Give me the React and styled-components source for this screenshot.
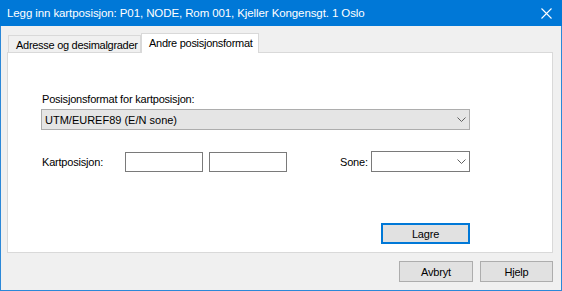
import React from 'react';
import styled, { createGlobalStyle } from 'styled-components';

const Global = createGlobalStyle`
  html, body { margin: 0; padding: 0; background: #f0f0f0; }
  body { font-family: "Liberation Sans", Arial, sans-serif; font-size: 11px; color: #000; }
  * { box-sizing: border-box; }
`;

const Window = styled.div`
  width: 562px;
  height: 291px;
  display: flex;
  flex-direction: column;
  background: #f0f0f0;
`;

const TitleBar = styled.div`
  height: 26px;
  flex: none;
  background: #0078d7;
  color: #fff;
  display: flex;
  align-items: center;
  justify-content: space-between;
  padding-left: 7px;
  font-size: 11.5px;
  letter-spacing: -0.1px;
`;

const CloseIcon = styled.svg`
  width: 11px;
  height: 11px;
  margin-right: 10px;
  display: block;
`;

const Frame = styled.div`
  flex: 1;
  display: flex;
  flex-direction: column;
  border: 1px solid #2b88d8;
  border-top: none;
  padding: 7px 8px 8px 6px;
`;

const TabStrip = styled.div`
  height: 20px;
  margin-bottom: -1px;
  display: flex;
  align-items: flex-end;
  padding-left: 1px;
`;

const Tab = styled.div`
  position: relative;
  z-index: ${p => (p.$active ? 2 : 0)};
  height: ${p => (p.$active ? 20 : 18)}px;
  width: ${p => p.$w}px;
  padding: 3px 0 0 7px;
  background: ${p => (p.$active ? '#fff' : '#f0f0f0')};
  border: 1px solid #d9d9d9;
  border-bottom: none;
  white-space: nowrap;
  line-height: 13px;
  letter-spacing: -0.28px;
`;

const Panel = styled.div`
  position: relative;
  z-index: 1;
  height: 201px;
  background: #fff;
  border: 1px solid #d9d9d9;
  padding: 40px 82px 0 33px;
  display: flex;
  flex-direction: column;
`;

const FieldLabel = styled.div`
  line-height: 13px;
  padding-left: 1px;
  letter-spacing: -0.2px;
  white-space: nowrap;
`;

const Combo = styled.div`
  margin-top: ${p => p.$mt || 0}px;
  height: 21px;
  width: ${p => (p.$w ? `${p.$w}px` : 'auto')};
  border: 1px solid ${p => (p.$flat ? '#7a7a7a' : '#adadad')};
  background: ${p => (p.$flat ? '#fff' : '#e5e5e5')};
  display: flex;
  align-items: center;
  justify-content: space-between;
  padding: 0 3px 0 3px;
  letter-spacing: 0;
  white-space: nowrap;
`;

const Chevron = () => (
  <svg width="9" height="5" viewBox="0 0 9 5" style={{ display: 'block' }}>
    <path d="M0.5 0.5 L4.5 4.5 L8.5 0.5" fill="none" stroke="#606060" strokeWidth="1" />
  </svg>
);

const Row = styled.div`
  margin-top: 21px;
  display: flex;
  align-items: center;
  height: 21px;
`;

const RowLabel = styled.div`
  width: ${p => p.$w}px;
  padding-left: ${p => p.$pl || 0}px;
  letter-spacing: -0.2px;
  white-space: nowrap;
  flex: none;
`;

const TextBox = styled.div`
  width: 78px;
  height: 20px;
  border: 1px solid #7a7a7a;
  background: #fff;
  margin-right: ${p => p.$mr || 0}px;
  flex: none;
`;

const Spacer = styled.div`
  flex: 1;
`;

const ButtonRow = styled.div`
  margin-top: ${p => p.$mt || 0}px;
  display: flex;
  justify-content: flex-end;
  gap: 7px;
`;

const Button = styled.div`
  width: ${p => p.$w}px;
  height: 21px;
  background: #e1e1e1;
  border: ${p => (p.$default ? '2px solid #0078d7' : '1px solid #adadad')};
  display: flex;
  align-items: center;
  justify-content: center;
  letter-spacing: -0.2px;
`;

const Footer = styled(ButtonRow)`
  margin-top: 8px;
`;

export default function App() {
  return (
    <>
      <Global />
      <Window>
        <TitleBar>
          <span>Legg inn kartposisjon: P01, NODE, Rom 001, Kjeller Kongensgt. 1 Oslo</span>
          <CloseIcon viewBox="0 0 11 11">
            <path d="M0.5 0.5 L10.5 10.5 M10.5 0.5 L0.5 10.5" stroke="#fff" strokeWidth="1.1" fill="none" />
          </CloseIcon>
        </TitleBar>
        <Frame>
          <TabStrip>
            <Tab $w={133}>Adresse og desimalgrader</Tab>
            <Tab $active $w={118}>Andre posisjonsformat</Tab>
          </TabStrip>
          <Panel>
            <FieldLabel>Posisjonsformat for kartposisjon:</FieldLabel>
            <Combo $mt={3}>
              <span>UTM/EUREF89 (E/N sone)</span>
              <Chevron />
            </Combo>
            <Row>
              <RowLabel $w={84} $pl={1}>Kartposisjon:</RowLabel>
              <TextBox $mr={6} />
              <TextBox />
              <Spacer />
              <RowLabel $w={31}>Sone:</RowLabel>
              <Combo $flat $w={99}>
                <span />
                <Chevron />
              </Combo>
            </Row>
            <ButtonRow $mt={51}>
              <Button $default $w={89}>Lagre</Button>
            </ButtonRow>
          </Panel>
          <Footer>
            <Button $w={74}>Avbryt</Button>
            <Button $w={73}>Hjelp</Button>
          </Footer>
        </Frame>
      </Window>
    </>
  );
}
